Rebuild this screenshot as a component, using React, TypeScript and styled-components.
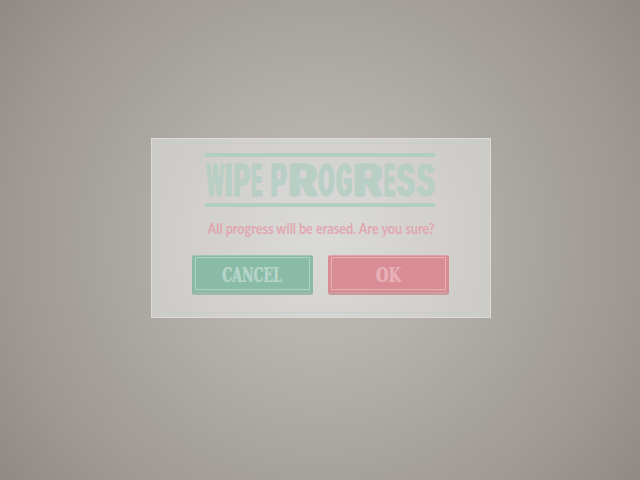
import React from "react";
import styled, { createGlobalStyle } from "styled-components";

const GlobalStyle = createGlobalStyle`
  * { box-sizing: border-box; }
  body { margin: 0; background: #a5a29b; }
`;

const Backdrop = styled.main`
  width: 640px;
  height: 480px;
  padding: 138px 0 0 151px;
  overflow: hidden;
  background: radial-gradient(circle at 320px 240px, #bebbb4 0, #b6b3ac 110px, #a9a69f 210px, #9f9a93 300px, #8f8a83 400px);
`;

const Dialog = styled.section`
  width: 340px;
  height: 180px;
  padding: 4px;
  border: 1px solid #dcdbd8;
  background: radial-gradient(circle at 169px 101px, #dadad8 0, #d6d5d3 65px, #d2cfcc 125px, #cccbc7 175px);
`;

const Frame = styled.div`
  height: 170px;
  border: 1px solid #c7cfca;
  display: flex;
  flex-direction: column;
  align-items: center;
  padding: 9px 2px 0 0;
`;

const Heading = styled.h1`
  margin: 0;
  width: 230px;
  height: 54px;
  border: solid #b2cec3;
  border-width: 4px 0;
  display: flex;
  align-items: center;
  padding-left: 1px;
  color: #b9cfc6;
  font: 700 47px/46px "Liberation Sans", sans-serif;
`;

const Glyph = styled.span<{ $w: number; $x: number; $fat: number }>`
  flex: none;
  width: ${(p) => p.$w}px;
  display: flex;
  justify-content: center;
  white-space: pre;

  & > span {
    flex: none;
    transform: scaleX(${(p) => p.$x});
    -webkit-text-stroke: 1.5px #b9cfc6;
    text-shadow: ${(p) => `${-p.$fat}px 0, ${p.$fat}px 0, ${-p.$fat / 2}px 0, ${p.$fat / 2}px 0`};
  }
`;

const Message = styled.p`
  margin: 10px 0 0 2px;
  height: 22px;
  white-space: nowrap;
  color: #e1a7b0;
  font: 700 15px/22px Lato, sans-serif;
  transform: scaleX(0.84);
`;

const Actions = styled.div`
  display: flex;
  gap: 15px;
  margin-top: 16px;
`;

const tones = {
  green: { fill: "#8abba7", top: "#a0c5b5", bottom: "#9bb9a8", line: "#b0d2c4", text: "#b5d4c8" },
  red: { fill: "#d88d95", top: "#dfa2aa", bottom: "#cc9b9d", line: "#e8b0b7", text: "#e7b0b6" },
};

const Button = styled.button<{ $tone: keyof typeof tones }>`
  width: 121px;
  height: 40px;
  padding: 1px 3px 2px;
  border: solid;
  border-width: 1px 0 3px;
  border-color: ${(p) => tones[p.$tone].top} transparent ${(p) => tones[p.$tone].bottom};
  border-radius: 2px;
  background: ${(p) => tones[p.$tone].fill};
  color: ${(p) => tones[p.$tone].text};
  font: 700 21px/30px "DejaVu Serif", serif;
`;

const Label = styled.span<{ $tone: keyof typeof tones; $x: number }>`
  height: 33px;
  border: 1px solid ${(p) => tones[p.$tone].line};
  display: flex;
  align-items: center;
  justify-content: center;

  & > span {
    padding-top: 2px;
    transform: scaleX(${(p) => p.$x});
    text-shadow: 0.8px 0;
  }
`;

// Wood-type title: every sort has its own width, squeeze and stem thickness.
const title: [string, number, number, number][] = [
  ["W", 19, 0.39, 1.4],
  ["I", 8, 0.58, 1.6],
  ["P", 17, 0.5, 2.4],
  ["E", 13, 0.34, 2.6],
  [" ", 7.5, 1, 0],
  ["P", 17, 0.5, 2.4],
  ["R", 30, 0.79, 3.4],
  ["O", 17.5, 0.41, 3.2],
  ["G", 18, 0.41, 3.2],
  ["R", 30, 0.79, 3.4],
  ["E", 13, 0.34, 2.6],
  ["S", 19.5, 0.54, 2.8],
  ["S", 19.5, 0.54, 2.8],
];

export default function App() {
  return (
    <>
      <GlobalStyle />
      <Backdrop>
        <Dialog role="dialog">
          <Frame>
            <Heading>
              {title.map(([char, w, x, fat], i) => (
                <Glyph key={i} $w={w} $x={x} $fat={fat}>
                  <span>{char}</span>
                </Glyph>
              ))}
            </Heading>
            <Message>All progress will be erased. Are you sure?</Message>
            <Actions>
              <Button $tone="green">
                <Label $tone="green" $x={0.6}><span>CANCEL</span></Label>
              </Button>
              <Button $tone="red">
                <Label $tone="red" $x={0.68}><span>OK</span></Label>
              </Button>
            </Actions>
          </Frame>
        </Dialog>
      </Backdrop>
    </>
  );
}
